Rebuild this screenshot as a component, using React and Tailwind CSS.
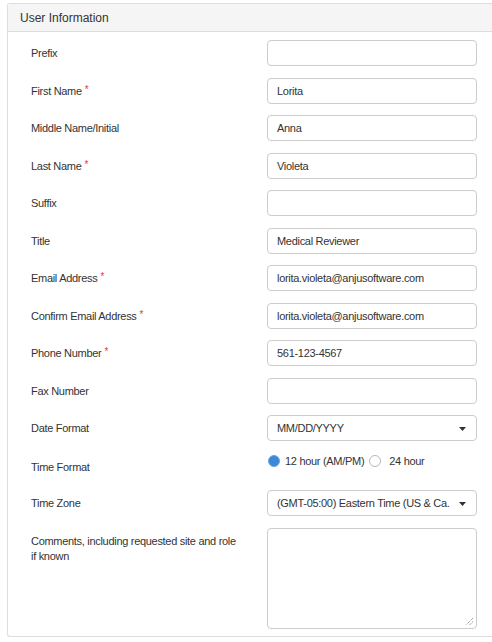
import React from "react";

const rows = [
  { label: "Prefix", value: "" },
  { label: "First Name", value: "Lorita", req: true },
  { label: "Middle Name/Initial", value: "Anna" },
  { label: "Last Name", value: "Violeta", req: true },
  { label: "Suffix", value: "" },
  { label: "Title", value: "Medical Reviewer" },
  { label: "Email Address", value: "lorita.violeta@anjusoftware.com", req: true },
  { label: "Confirm Email Address", value: "lorita.violeta@anjusoftware.com", req: true },
  { label: "Phone Number", value: "561-123-4567", req: true },
  { label: "Fax Number", value: "" },
];

function Label({ children, req }) {
  return (
    <div className="flex h-[26px] items-center pt-[1px] text-[11px] tracking-[-0.3px] text-[#333]">
      {children}
      {req && <span className="ml-[3px] -mt-[4px] text-[10px] text-[#e8383d]">*</span>}
    </div>
  );
}

function Field({ children }) {
  return (
    <div className="flex h-[26px] w-[210px] items-center rounded-[4px] border border-[#ccc] bg-white px-[9px] pt-[1px] text-[11px] tracking-[-0.3px] text-[#333]">
      {children}
    </div>
  );
}

function Select({ value }) {
  return (
    <div className="flex h-[26px] w-[210px] items-center justify-between rounded-[4px] border border-[#ccc] bg-white pl-[9px] pr-[10px] pt-[1px] text-[11px] tracking-[-0.3px] text-[#333]">
      <span className="overflow-hidden whitespace-nowrap">{value}</span>
      <svg width="7" height="4" viewBox="0 0 7 4" className="ml-2 shrink-0">
        <path d="M0 0h7L3.5 4z" fill="#333" />
      </svg>
    </div>
  );
}

export default function App() {
  return (
    <div
      className="min-h-[642px] bg-white pt-[3px] pl-[7px]"
      style={{ fontFamily: '"Liberation Sans", Arial, sans-serif' }}
    >
      <div className="border border-r-0 border-[#ddd] rounded-l-[3px]">
        {/* Header */}
        <div className="flex h-[28px] items-center border-b border-[#ddd] bg-[#f5f5f5] px-[12px] pt-[1px] text-[12px] text-[#333]">
          User Information
        </div>

        {/* Body */}
        <div className="grid grid-cols-[212px_210px] gap-x-[24px] gap-y-[11.5px] pt-[8px] pb-[7px] pl-[23px]">
          {rows.map((r) => (
            <React.Fragment key={r.label}>
              <Label req={r.req}>{r.label}</Label>
              <Field>{r.value}</Field>
            </React.Fragment>
          ))}

          <Label>Date Format</Label>
          <Select value="MM/DD/YYYY" />

          <div className="flex h-[26px] items-end pb-[3px] text-[11px] tracking-[-0.3px] text-[#333]">
            Time Format
          </div>
          <div className="flex h-[26px] items-start pl-[1px] text-[11px] tracking-[-0.3px] text-[#333]">
            <label className="flex items-center">
              <span className="h-[12px] w-[12px] rounded-full border border-[#6aa5de] bg-[#3b87d8]" />
              <span className="ml-[5px]">12 hour (AM/PM)</span>
            </label>
            <label className="ml-[5px] flex items-center">
              <span className="h-[12px] w-[12px] rounded-full border border-[#b8b8b8] bg-white" />
              <span className="ml-[8px]">24 hour</span>
            </label>
          </div>

          <Label>Time Zone</Label>
          <Select value="(GMT-05:00) Eastern Time (US & Ca." />

          <div className="pt-[6px] text-[11px] leading-[15px] tracking-[-0.3px] text-[#333]">
            Comments, including requested site and role if known
          </div>
          <div className="relative h-[101px] w-[210px] rounded-[4px] border border-[#ccc] bg-white">
            <svg width="9" height="9" viewBox="0 0 9 9" className="absolute bottom-[2px] right-[2px]">
              <path d="M8 1L1 8M8 4.5L4.5 8" stroke="#777" strokeWidth="1" strokeDasharray="1 1" />
            </svg>
          </div>
        </div>
      </div>
    </div>
  );
}
